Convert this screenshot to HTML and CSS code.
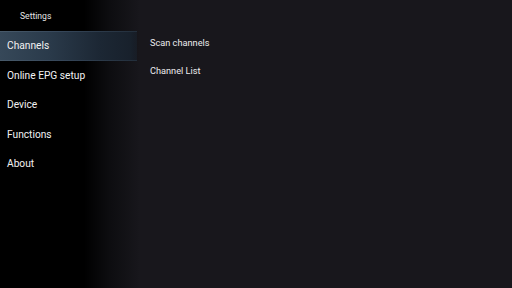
FILE: index.html
```html
<!DOCTYPE html>
<html lang="en">

<head>
    <meta charset="UTF-8" />
    <meta name="viewport" content="width=device-width, initial-scale=1.0" />
    <title>Settings</title>
    <link rel="stylesheet" href="styles.css">
</head>

<body>
    <div class="layout">
        <div class="sidebar">
            <div class="sidebar-title">Settings</div>
            <ul class="menu">
                <li class="menu-item selected">Channels</li>
                <li class="menu-item">Online EPG setup</li>
                <li class="menu-item">Device</li>
                <li class="menu-item">Functions</li>
                <li class="menu-item">About</li>
            </ul>
        </div>

        <div class="main-content">
            <ul class="submenu">
                <li class="submenu-item">Scan channels</li>
                <li class="submenu-item">Channel List</li>
            </ul>
        </div>
    </div>
</body>

</html>
```

FILE: styles.css
```css
html,
body {
    margin: 0;
    padding: 0;
    height: 100%;
}

body {
    font-family: Roboto, "Noto Sans", sans-serif;
    color: #f2f2f2;
    background: linear-gradient(to right, #000 0, #000 84px, #0d0d10 110px, #18171c 140px, #18171c 100%);
    overflow: hidden;
}

.layout {
    display: flex;
    align-items: flex-start;
    height: 100%;
}

.sidebar {
    width: 137px;
    flex-shrink: 0;
}

.sidebar-title {
    height: 31px;
    line-height: 32px;
    padding-left: 20px;
    font-size: 8.6px;
    color: #e6e6e6;
}

.menu {
    list-style: none;
    margin: 0;
    padding: 0;
}

.menu-item {
    height: 29.5px;
    line-height: 29.5px;
    padding-left: 7px;
    font-size: 10.2px;
    white-space: nowrap;
    box-sizing: border-box;
}

.menu-item.selected {
    background: linear-gradient(to right, #364859 0, #2a3a4a 50px, #1c2734 100px, #18212c 130px, rgba(24, 33, 44, 0.6) 137px);
    border-style: solid;
    border-width: 1px 0;
    border-image: linear-gradient(to right, #485a6a, #36475a 60px, #222e3b 137px) 1;
    line-height: 27.5px;
}

.main-content {
    flex-grow: 1;
    padding-top: 29px;
    padding-left: 13px;
}

.submenu {
    list-style: none;
    margin: 0;
    padding: 0;
}

.submenu-item {
    height: 28px;
    line-height: 28px;
    font-size: 9.2px;
    color: #ececec;
}
```
